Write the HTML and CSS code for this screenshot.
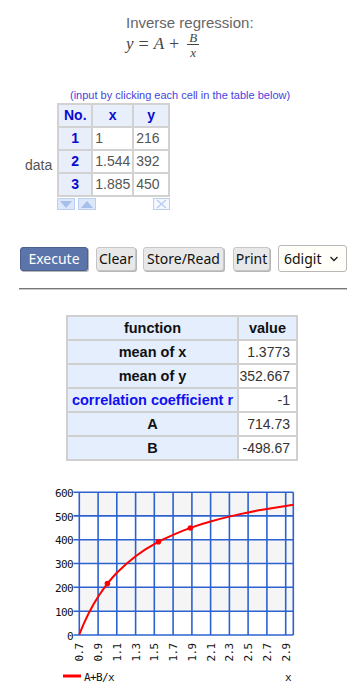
FILE: index.html
```html
<!DOCTYPE html>
<html lang="en">
<head>
    <meta charset="UTF-8">
    <meta name="viewport" content="width=device-width, initial-scale=1.0">
    <title>Inverse regression</title>
    <link rel="stylesheet" href="styles.css">
</head>
<body>
<div class="title">
    <div class="title-name">Inverse regression:</div>
    <div class="formula">
        <i>y</i><span class="op">=</span><i>A</i><span class="op">+</span>
        <span class="frac"><i class="num">B</i><i class="den">x</i></span>
    </div>
</div>

<div class="note">(input by clicking each cell in the table below)</div>

<div class="data-wrap">
    <div class="data-label">data</div>
    <div>
        <table class="data">
            <tr><th class="c-no">No.</th><th class="c-x">x</th><th class="c-y">y</th></tr>
            <tr><th>1</th><td>1</td><td>216</td></tr>
            <tr><th>2</th><td>1.544</td><td>392</td></tr>
            <tr><th>3</th><td>1.885</td><td>450</td></tr>
        </table>
        <div class="data-tools">
            <span class="tool">
                <svg width="16" height="10" viewBox="0 0 16 10"><polygon points="2,2 14,2 8,9" fill="#a6bfeb"/></svg>
            </span>
            <span class="tool">
                <svg width="16" height="10" viewBox="0 0 16 10"><polygon points="2,9 14,9 8,2" fill="#a6bfeb"/></svg>
            </span>
            <span class="tool tool-del">
                <svg width="15" height="10" viewBox="0 0 15 10"><path d="M3 1 L12 9 M12 1 L3 9" stroke="#b9cdef" stroke-width="1.3"/></svg>
            </span>
        </div>
    </div>
</div>

<div class="buttons">
    <button class="btn btn-exec">Execute</button>
    <button class="btn btn-clear">Clear</button>
    <button class="btn btn-store">Store/Read</button>
    <button class="btn btn-print">Print</button>
    <div class="select-wrap">
        <select class="digits">
            <option>6digit</option>
        </select>
        <svg class="chevron" width="10" height="6" viewBox="0 0 10 6"><path d="M1.5 1 L5 4.5 L8.5 1" fill="none" stroke="#222" stroke-width="1.4"/></svg>
    </div>
</div>

<hr class="sep">

<table class="result">
    <tr><th>function</th><th class="v-head">value</th></tr>
    <tr><th>mean of x</th><td>1.3773</td></tr>
    <tr><th>mean of y</th><td>352.667</td></tr>
    <tr><th class="blue">correlation coefficient r</th><td>-1</td></tr>
    <tr><th>A</th><td>714.73</td></tr>
    <tr><th>B</th><td>-498.67</td></tr>
</table>

<svg class="chart" width="364" height="218" viewBox="0 480 364 218">
    <!-- bands -->
    <rect x="79.3" y="494.3" width="214" height="23.6" fill="#f5f5f5"/>
    <rect x="79.3" y="541.7" width="214" height="23.8" fill="#f5f5f5"/>
    <rect x="79.3" y="589.3" width="214" height="23.9" fill="#f5f5f5"/>
    <g stroke="#2c62d0" stroke-width="1.6">
        <line x1="79.3" y1="494.3" x2="79.3" y2="637"/>
        <line x1="98.1" y1="494.3" x2="98.1" y2="637"/>
        <line x1="116.8" y1="494.3" x2="116.8" y2="637"/>
        <line x1="135.6" y1="494.3" x2="135.6" y2="637"/>
        <line x1="154.3" y1="494.3" x2="154.3" y2="637"/>
        <line x1="173.1" y1="494.3" x2="173.1" y2="637"/>
        <line x1="191.9" y1="494.3" x2="191.9" y2="637"/>
        <line x1="210.6" y1="494.3" x2="210.6" y2="637"/>
        <line x1="229.4" y1="494.3" x2="229.4" y2="637"/>
        <line x1="248.1" y1="494.3" x2="248.1" y2="637"/>
        <line x1="266.9" y1="494.3" x2="266.9" y2="637"/>
        <line x1="285.7" y1="494.3" x2="285.7" y2="637"/>
        <line x1="293.3" y1="494.3" x2="293.3" y2="637"/>
        <line x1="73.5" y1="494.3" x2="293.3" y2="494.3"/>
        <line x1="73.5" y1="517.9" x2="293.3" y2="517.9"/>
        <line x1="73.5" y1="541.7" x2="293.3" y2="541.7"/>
        <line x1="73.5" y1="565.5" x2="293.3" y2="565.5"/>
        <line x1="73.5" y1="589.3" x2="293.3" y2="589.3"/>
        <line x1="73.5" y1="613.2" x2="293.3" y2="613.2"/>
        <line x1="73.5" y1="637" x2="293.3" y2="637"/>
    </g>
    <g class="ylab" text-anchor="end">
        <text x="73" y="499">600</text>
        <text x="73" y="522.6">500</text>
        <text x="73" y="546.4">400</text>
        <text x="73" y="570.2">300</text>
        <text x="73" y="594">200</text>
        <text x="73" y="617.9">100</text>
        <text x="73" y="641.7">0</text>
    </g>
    <g class="xlab" text-anchor="end">
        <text x="83.3" y="645.5" transform="rotate(-90 83.3 645.5)">0.7</text>
        <text x="102.1" y="645.5" transform="rotate(-90 102.1 645.5)">0.9</text>
        <text x="120.8" y="645.5" transform="rotate(-90 120.8 645.5)">1.1</text>
        <text x="139.6" y="645.5" transform="rotate(-90 139.6 645.5)">1.3</text>
        <text x="158.3" y="645.5" transform="rotate(-90 158.3 645.5)">1.5</text>
        <text x="177.1" y="645.5" transform="rotate(-90 177.1 645.5)">1.7</text>
        <text x="195.9" y="645.5" transform="rotate(-90 195.9 645.5)">1.9</text>
        <text x="214.6" y="645.5" transform="rotate(-90 214.6 645.5)">2.1</text>
        <text x="233.4" y="645.5" transform="rotate(-90 233.4 645.5)">2.3</text>
        <text x="252.1" y="645.5" transform="rotate(-90 252.1 645.5)">2.5</text>
        <text x="270.9" y="645.5" transform="rotate(-90 270.9 645.5)">2.7</text>
        <text x="289.7" y="645.5" transform="rotate(-90 289.7 645.5)">2.9</text>
    </g>
    <polyline fill="none" stroke="#ff0000" stroke-width="2"
              points="79.3,636.4 84.0,625.1 88.7,615.3 93.4,606.5 98.1,598.8 102.8,591.9 107.4,585.6 112.1,580 116.8,574.8 126.2,565.9 135.6,558.3 145.0,551.7 154.3,546.1 163.7,541.2 173.1,536.8 182.5,532.9 191.9,529.4 201.2,526.3 210.6,523.5 220.0,520.9 229.4,518.6 238.8,516.4 248.1,514.4 257.5,512.6 266.9,510.9 276.3,509.4 285.7,508 293.3,506.8"/>
    <g fill="#ff0000">
        <circle cx="107.4" cy="585.6" r="2.8"/>
        <circle cx="158.4" cy="543.8" r="2.8"/>
        <circle cx="190.4" cy="530" r="2.8"/>
    </g>
    <line x1="63" y1="678" x2="81" y2="678" stroke="#ff0000" stroke-width="3"/>
    <text class="legend" x="84" y="682.5">A+B/x</text>
    <text class="legend" x="285" y="682.5">x</text>
</svg>
</body>
</html>
```

FILE: styles.css
```css
body {
    margin: 0;
    padding: 0;
    width: 364px;
    font-family: "Liberation Sans", Arial, sans-serif;
    color: #333;
    background-color: #ffffff;
}
.title {
    padding: 14px 0 0 126px;
    color: #666;
}
.title-name {
    font-size: 15px;
    line-height: 17px;
}
.formula {
    display: flex;
    align-items: center;
    height: 26px;
    font-family: "Liberation Serif", "Times New Roman", serif;
    font-size: 17px;
    color: #444;
}
.formula .op {
    margin: 0 5px;
    font-size: 18px;
}
.frac {
    display: flex;
    flex-direction: column;
    align-items: center;
    margin-left: 3px;
    margin-top: 2px;
    font-size: 13px;
    line-height: 11px;
}
.frac .num {
    padding: 0 2px 1px;
    border-bottom: 1px solid #444;
}
.frac .den {
    padding-top: 2px;
}
.note {
    margin-top: 32px;
    padding-left: 70px;
    font-size: 11px;
    line-height: 13px;
    color: #4444e0;
}
.data-wrap {
    display: flex;
    align-items: flex-start;
    margin-top: 1px;
    padding-left: 25px;
}
.data-label {
    margin-right: 5px;
    padding-top: 54px;
    font-size: 14px;
    line-height: 16px;
    color: #555;
}
.data {
    border-collapse: separate;
    border-spacing: 0;
    border-top: 2px solid #d2d2d2;
    border-left: 2px solid #d2d2d2;
    font-size: 14px;
}
.data th, .data td {
    padding: 0;
    border-right: 2px solid #d2d2d2;
    border-bottom: 2px solid #d2d2d2;
    line-height: 21px;
}
.data th {
    background-color: #e8effb;
    color: #0a0ad0;
    font-weight: bold;
    text-align: center;
}
.data td {
    padding-left: 2px;
    color: #555;
    text-align: left;
}
.c-no { width: 32px; }
.c-x { width: 39px; }
.c-y { width: 34px; }
.data-tools {
    display: flex;
    margin-top: 1px;
    height: 12px;
}
.tool {
    display: flex;
    align-items: center;
    justify-content: center;
    width: 16px;
    height: 10px;
    margin-right: 3px;
    border: 1px solid #bccff0;
    background-color: #dce7f9;
}
.tool-del {
    margin-left: auto;
    margin-right: 0;
    width: 15px;
    background-color: #f4f8fe;
}
.buttons {
    display: flex;
    align-items: center;
    gap: 8px;
    margin-top: 35px;
    padding-left: 20px;
}
.btn {
    height: 24px;
    padding: 0;
    border: 1px solid #c6c6c6;
    border-radius: 3px;
    background-color: #e8e8e8;
    box-shadow: 1px 1px 0 #b5b5b5;
    font-family: "Noto Sans", "Open Sans", sans-serif;
    font-size: 14px;
    color: #111;
    cursor: pointer;
}
.btn-exec {
    width: 68px;
    background-color: #5b74a9;
    border-color: #4c6190;
    color: #ffffff;
}
.btn-clear { width: 40px; }
.btn-store { width: 81px; margin-left: -1px; }
.btn-print { width: 37px; margin-left: 1px; }
.select-wrap {
    position: relative;
    width: 69px;
    height: 27px;
}
.digits {
    appearance: none;
    -webkit-appearance: none;
    width: 69px;
    height: 27px;
    padding: 0 0 0 5px;
    border: 1px solid #b8b8b8;
    border-radius: 3px;
    background-color: #fffef8;
    font-family: "Noto Sans", "Open Sans", sans-serif;
    font-size: 14px;
    color: #111;
}
.chevron {
    position: absolute;
    right: 8px;
    top: 11px;
}
.sep {
    height: 0;
    margin: 16px 17px 0 19px;
    border: 0;
    border-top: 1px solid #777;
    border-bottom: 1px solid #c8c8c8;
}
.result {
    margin: 25px auto 0;
    border-collapse: separate;
    border-spacing: 0;
    border-top: 2px solid #d0d0d0;
    border-left: 2px solid #d0d0d0;
    font-size: 14px;
}
.result th, .result td {
    padding: 0;
    border-right: 2px solid #d0d0d0;
    border-bottom: 2px solid #d0d0d0;
    line-height: 22px;
}
.result th {
    width: 169px;
    background-color: #e4eefc;
    color: #111;
    font-size: 14.5px;
    font-weight: bold;
    text-align: center;
}
.result th.v-head {
    width: 57px;
}
.result th.blue {
    color: #1010f0;
}
.result td {
    padding-right: 6px;
    color: #333;
    text-align: right;
}
.chart {
    display: block;
    margin-top: 17px;
}
.ylab text, .xlab text, .legend {
    font-family: "DejaVu Sans Mono", "Liberation Mono", monospace;
    font-size: 11px;
    letter-spacing: -0.6px;
    fill: #111;
}
```
